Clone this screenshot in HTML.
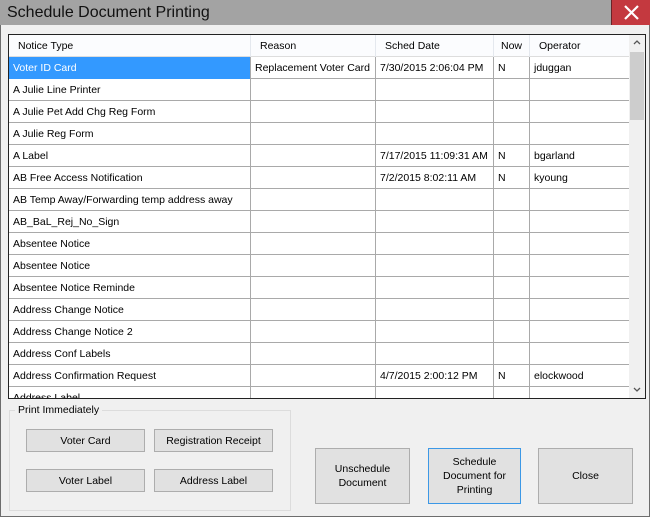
<!DOCTYPE html>
<html><head><style>
*{margin:0;padding:0;box-sizing:border-box}
body{width:650px;height:517px;background:#f0f0f0;font-family:"Liberation Sans",sans-serif;font-size:10.5px;color:#000;position:relative;overflow:hidden}
.win{position:absolute;left:0;top:0;width:650px;height:517px;border:1px solid #6d6d6d;border-top:none}
.title{position:absolute;left:0;top:0;width:650px;height:25px;background:#a3a3a3;font-size:16px;padding:4px 0 0 7px;color:#111}
.x{position:absolute;left:611px;top:0;width:39px;height:25px;background:#c4393f;border-left:1px solid #6b2327}
.grid{position:absolute;left:8px;top:34px;width:638px;height:365px;border:1px solid #222;background:#fff;overflow:hidden}
.row{position:absolute;left:0;height:22px;width:620px;border-bottom:1px solid #a9a9a9}
.c{position:absolute;top:0;height:22px;line-height:22px;padding-left:4px;border-right:1px solid #a9a9a9;white-space:nowrap;overflow:hidden}
.hdr{background:#fbfcfe;border-bottom:1px solid #ddd}
.hdr .c{border-right:1px solid #e4e8ee;padding-left:9px}
.sb{position:absolute;left:620px;top:0;width:16px;height:363px;background:#f0f0f0}
.thumb{position:absolute;left:1px;top:17px;width:14px;height:68px;background:#cdcdcd}
.btn{position:absolute;background:#e1e1e1;border:1px solid #adadad;text-align:center;font-size:10.5px;display:flex;align-items:center;justify-content:center;line-height:14px}
.fs{position:absolute;left:9px;top:410px;width:282px;height:101px;border:1px solid #dcdcdc}
.fsl{position:absolute;left:15px;top:404px;background:#f0f0f0;padding:0 3px}
</style></head><body>
<div class="win"></div>
<div class="title">Schedule Document Printing</div>
<div class="x"><svg width="39" height="25"><path d="M13 6L26 19M26 6L13 19" stroke="#fff" stroke-width="2.2"/></svg></div>
<div class="grid">
<div class="row hdr" style="top:0"><div class="c" style="left:0;width:242px">Notice Type</div><div class="c" style="left:242px;width:125px">Reason</div><div class="c" style="left:367px;width:118px">Sched Date</div><div class="c" style="left:485px;width:36px;padding-left:7px">Now</div><div class="c" style="left:521px;width:99px;border-right:none">Operator</div></div>
<div id="rows"></div>
<div class="sb"><div class="thumb"></div><svg style="position:absolute;left:4px;top:4px" width="8" height="6"><path d="M1 5L4 2L7 5" stroke="#555" fill="none" stroke-width="1.3"/></svg><svg style="position:absolute;left:4px;top:352px" width="8" height="6"><path d="M1 1L4 4L7 1" stroke="#555" fill="none" stroke-width="1.3"/></svg></div>
</div>
<script>
var d=[["Voter ID Card","Replacement Voter Card","7/30/2015 2:06:04 PM","N","jduggan"],["A Julie Line Printer"],["A Julie Pet Add Chg Reg Form"],["A Julie Reg Form"],["A Label","","7/17/2015 11:09:31 AM","N","bgarland"],["AB Free Access Notification","","7/2/2015 8:02:11 AM","N","kyoung"],["AB Temp Away/Forwarding temp address away"],["AB_BaL_Rej_No_Sign"],["Absentee Notice"],["Absentee Notice"],["Absentee Notice Reminde"],["Address Change Notice"],["Address Change Notice 2"],["Address Conf Labels"],["Address Confirmation Request","","4/7/2015 2:00:12 PM","N","elockwood"],["Address Label"]];
var L=[0,242,367,485,521],W=[242,125,118,36,99],h="";
d.forEach(function(r,i){h+='<div class="row" style="top:'+(22+i*22)+'px">';for(var j=0;j<5;j++){var s='left:'+L[j]+'px;width:'+W[j]+'px;';if(i==0&&j==0)s+='background:#3399ff;color:#fff;';if(j==4)s+='border-right:none;';h+='<div class="c" style="'+s+'">'+(r[j]||'')+'</div>'}h+='</div>'});
document.getElementById('rows').innerHTML=h;
</script>
<div class="fs"></div><div class="fsl">Print Immediately</div>
<div class="btn" style="left:26px;top:429px;width:119px;height:23px">Voter Card</div>
<div class="btn" style="left:154px;top:429px;width:119px;height:23px">Registration Receipt</div>
<div class="btn" style="left:26px;top:469px;width:119px;height:23px">Voter Label</div>
<div class="btn" style="left:154px;top:469px;width:119px;height:23px">Address Label</div>
<div class="btn" style="left:315px;top:448px;width:95px;height:56px">Unschedule<br>Document</div>
<div class="btn" style="left:428px;top:448px;width:93px;height:56px;border-color:#3c98e6">Schedule<br>Document for<br>Printing</div>
<div class="btn" style="left:538px;top:448px;width:95px;height:56px">Close</div>
</body></html>
